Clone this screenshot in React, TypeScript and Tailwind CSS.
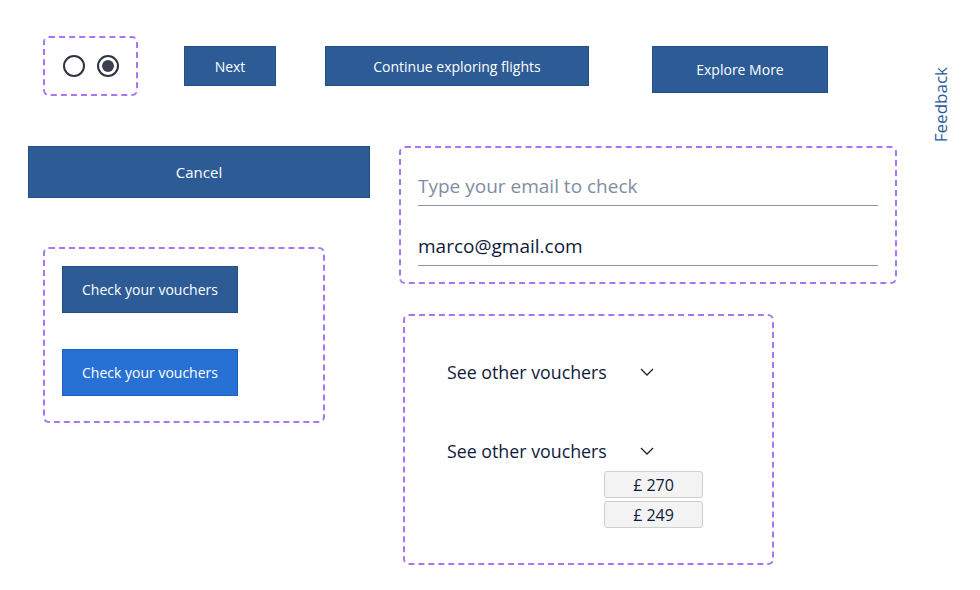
import React from 'react';

const btn =
  'flex items-center justify-center bg-[#2c5b96] border border-[#234e86] text-white text-[14px]';

function Radio({ checked }: { checked?: boolean }) {
  return (
    <span className="w-[22px] h-[22px] rounded-full border-[2px] border-[#2f3441] flex items-center justify-center">
      {checked && <span className="w-[12px] h-[12px] rounded-full bg-[#3b4150]" />}
    </span>
  );
}

function Chevron() {
  return (
    <svg width="14" height="8" viewBox="0 0 14 8" fill="none">
      <path d="M1 1l6 6 6-6" stroke="#1b2233" strokeWidth="1.3" />
    </svg>
  );
}

function VoucherSelect({ open }: { open?: boolean }) {
  return (
    <div className="relative">
      <div className="flex items-center h-[24px]">
        <span className="text-[17.8px] text-[#0e1b3c] w-[193px]">See other vouchers</span>
        <Chevron />
      </div>
      {open && (
        <div className="flex flex-col gap-[3px] ml-[157px] mt-[8px] w-[99px]">
          {['£ 270', '£ 249'].map((v) => (
            <div
              key={v}
              className="h-[27px] flex items-center justify-center bg-[#f3f3f3] border border-[#cfcfcf] rounded-[3px] text-[16px] text-[#0e1b3c]"
            >
              {v}
            </div>
          ))}
        </div>
      )}
    </div>
  );
}

export default function App() {
  return (
    <div className="relative w-[980px] h-[590px] bg-white font-['Open_Sans',sans-serif]">
      {/* top row */}
      <div className="flex items-start pt-[36px] pl-[43px]">
        <div className="w-[95px] h-[60px] border-2 border-dashed border-[#a876f2] rounded-md flex items-center gap-[12px] pl-[18px]">
          <Radio />
          <Radio checked />
        </div>
        <button className={`${btn} ml-[46px] mt-[10px] w-[92px] h-[40px]`}>Next</button>
        <button className={`${btn} ml-[49px] mt-[10px] w-[264px] h-[40px]`}>
          Continue exploring flights
        </button>
        <button className={`${btn} ml-[63px] mt-[10px] w-[176px] h-[47px]`}>
          Explore More
        </button>
      </div>

      <div className="absolute left-[928px] top-[67px] [writing-mode:vertical-rl] rotate-180 text-[17px] text-[#2c5b96]">
        Feedback
      </div>

      {/* main area */}
      <div className="flex items-start pt-[50px] pl-[28px]">
        <div className="w-[342px]">
          <button className={`${btn} w-full h-[52px] text-[15px]`}>Cancel</button>
          <div className="mt-[49px] ml-[15px] w-[282px] h-[176px] border-2 border-dashed border-[#a876f2] rounded-md pt-[17px] pl-[17px] flex flex-col gap-[36px]">
            <button className={`${btn} w-[176px] h-[47px]`}>Check your vouchers</button>
            <button className="flex items-center justify-center w-[176px] h-[47px] bg-[#2770d4] border border-[#1c5fbd] text-white text-[14px]">
              Check your vouchers
            </button>
          </div>
        </div>

        <div className="ml-[29px]">
          <div className="w-[498px] h-[138px] border-2 border-dashed border-[#a876f2] rounded-md pt-[18px] pl-[17px] flex flex-col gap-[20px]">
            <input
              readOnly
              placeholder="Type your email to check"
              className="w-[460px] h-[40px] border-b border-[#8796ab] text-[19px] text-[#0e1b3c] placeholder:text-[#7f8ca2] outline-none bg-transparent"
            />
            <input
              readOnly
              value="marco@gmail.com"
              className="w-[460px] h-[40px] border-b border-[#8796ab] text-[19px] text-[#0e1b3c] outline-none bg-transparent"
            />
          </div>

          <div className="mt-[30px] ml-[4px] w-[371px] h-[251px] border-2 border-dashed border-[#a876f2] rounded-md pt-[44px] pl-[42px] flex flex-col gap-[55px]">
            <VoucherSelect />
            <VoucherSelect open />
          </div>
        </div>
      </div>
    </div>
  );
}
